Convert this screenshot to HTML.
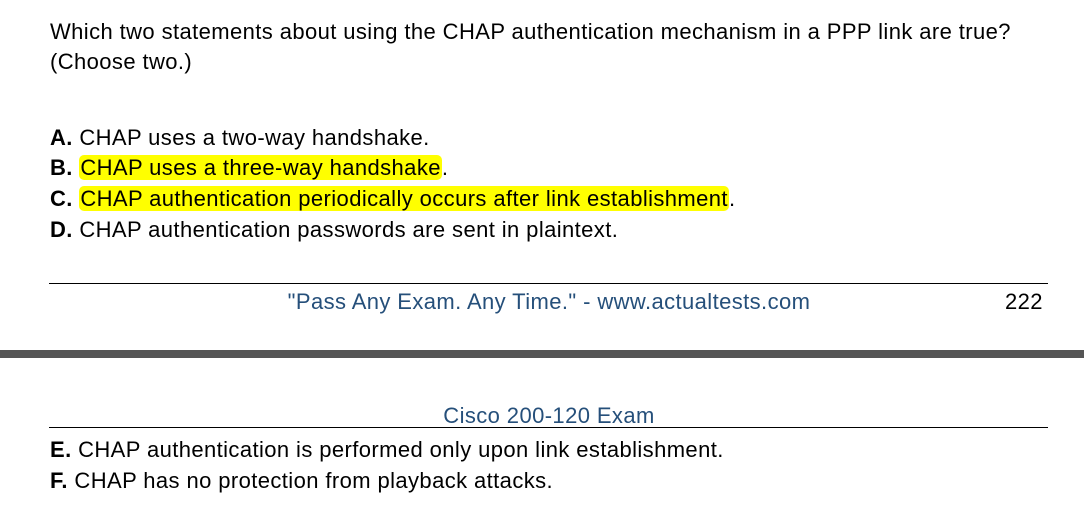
<!DOCTYPE html>
<html><head><style>
body{margin:0;width:1084px;height:507px;background:#fff;position:relative;overflow:hidden;font-family:"Liberation Sans",sans-serif;font-size:22px;letter-spacing:0.4px;color:#000}
.l{position:absolute;left:50px;white-space:nowrap;line-height:24px}
.h{background:#ffff00;border-radius:5px;padding:0 1px}
b{font-weight:bold}
.blue{color:#254f7a}
</style></head><body>
<div class="l" style="top:20px">Which two statements about using the CHAP authentication mechanism in a PPP link are true?</div>
<div class="l" style="top:50px">(Choose two.)</div>
<div class="l" style="top:126px"><b>A.</b> CHAP uses a two-way handshake.</div>
<div class="l" style="top:156px"><b>B.</b> <span class="h">CHAP uses a three-way handshake</span>.</div>
<div class="l" style="top:187px"><b>C.</b> <span class="h">CHAP authentication periodically occurs after link establishment</span>.</div>
<div class="l" style="top:218px"><b>D.</b> CHAP authentication passwords are sent in plaintext.</div>
<div style="position:absolute;left:49px;width:999px;top:283px;height:1px;background:#000"></div>
<div class="l blue" style="left:0;width:1098px;text-align:center;top:290px">"Pass Any Exam. Any Time." - www.actualtests.com</div>
<div class="l" style="left:1005px;top:290px">222</div>
<div style="position:absolute;left:0;width:1084px;top:350px;height:8px;background:#555"></div>
<div class="l blue" style="left:0;width:1098px;text-align:center;top:404px">Cisco 200-120 Exam</div>
<div style="position:absolute;left:49px;width:999px;top:427px;height:1px;background:#000"></div>
<div class="l" style="top:438px"><b>E.</b> CHAP authentication is performed only upon link establishment.</div>
<div class="l" style="top:469px"><b>F.</b> CHAP has no protection from playback attacks.</div>
</body></html>
